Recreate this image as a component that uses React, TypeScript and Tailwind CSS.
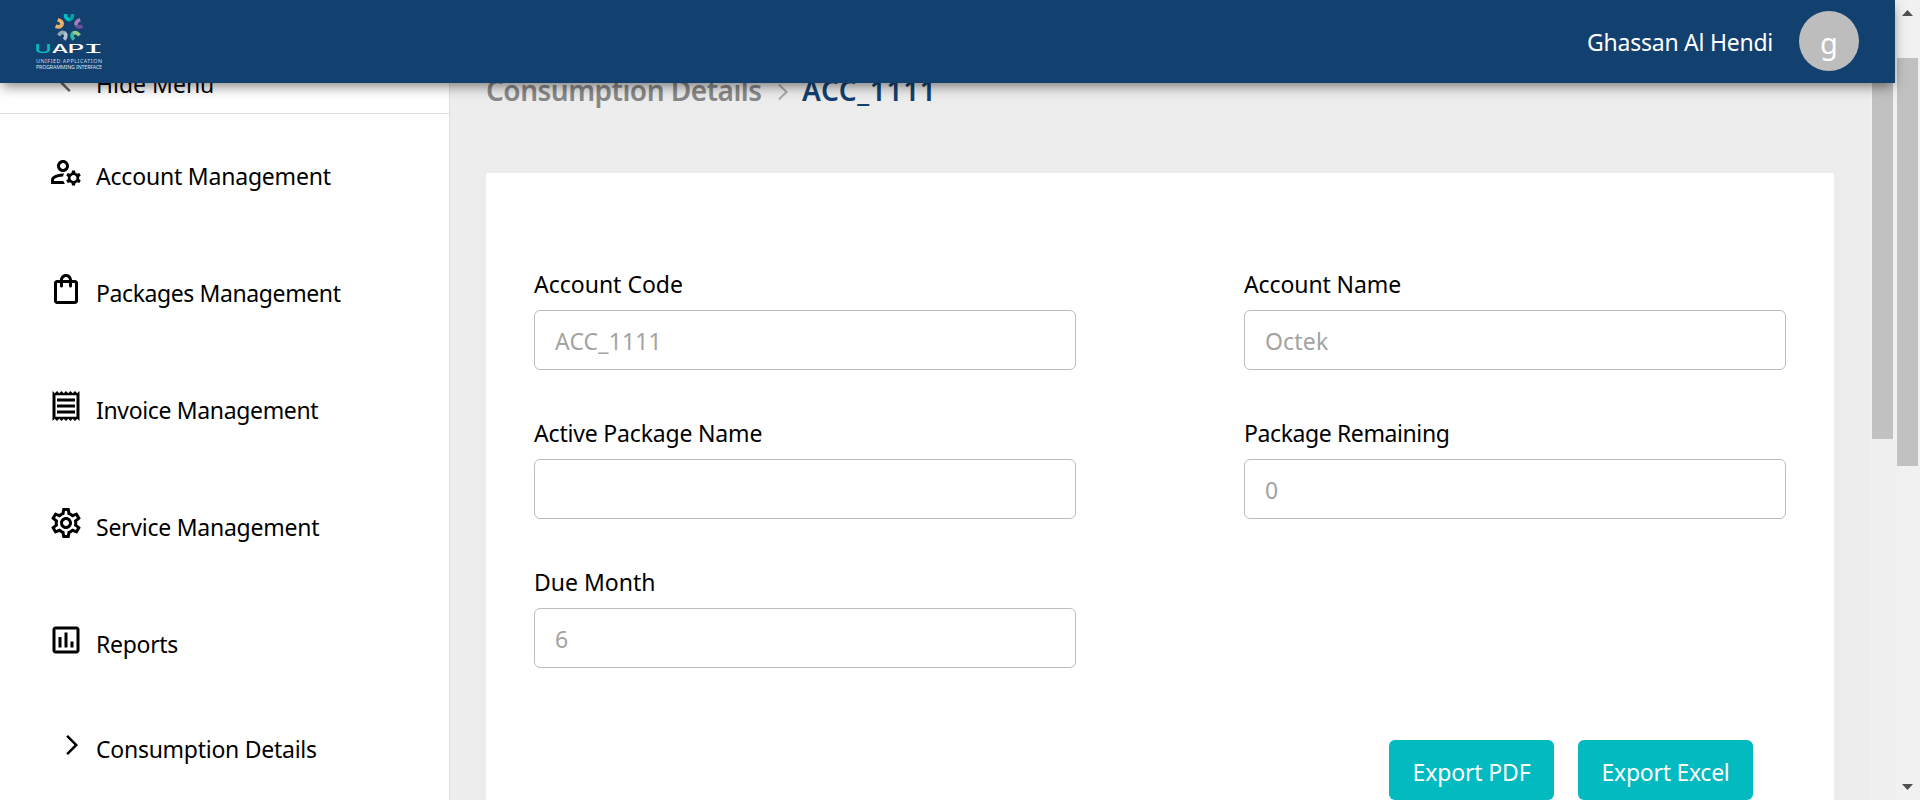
import type { ReactNode } from "react";
import {
  MdOutlineManageAccounts,
  MdOutlineShoppingBag,
  MdOutlineReceipt,
  MdOutlineSettings,
  MdOutlineAssessment,
  MdArrowForwardIos,
  MdArrowBackIos,
} from "react-icons/md";

const petals = [
  { angle: 0, left: "#04bdc0", right: "#00a3a6" },
  { angle: 72, left: "#a67fbd", right: "#6d4fa0" },
  { angle: 144, left: "#8ccb88", right: "#37b6a2" },
  { angle: 216, left: "#b3c6cf", right: "#8fa6b4" },
  { angle: 288, left: "#e5b16c", right: "#edb56a" },
];

function Logo() {
  return (
    <svg width="70" height="60" viewBox="0 0 70 60" className="shrink-0">
      <g transform="translate(35 15)" fill="none" strokeWidth="3.6">
        {petals.map((p) => (
          <g key={p.angle} transform={`rotate(${p.angle})`}>
            <path d="M0 -7.4 C2.6 -7.6 3.6 -9.6 3.5 -13" stroke={p.right} />
            <path d="M0.4 -7.4 C-2.6 -7.6 -3.6 -9.6 -3.5 -13" stroke={p.left} />
          </g>
        ))}
      </g>
      <g fontFamily="Inter, sans-serif" fontSize="11.4" fontWeight="500" fill="#fff">
        <text transform="translate(0.6 41.4) scale(2.05 1)" fill="#05bcc0">U</text>
        <text transform="translate(17.8 41.4) scale(2.05 1)">A</text>
        <text transform="translate(33.6 41.4) scale(2.3 1)">P</text>
      </g>
      <text transform="translate(49 41.4) scale(3 1)" fontFamily="DejaVu Sans Mono, monospace" fontSize="11.4" fill="#fff">
        I
      </text>
      <text x="2" y="51.3" fontFamily="Noto Sans, sans-serif" fontSize="5.4" textLength="66" fill="#cfdae6">
        UNIFIED APPLICATION
      </text>
      <text x="2" y="56.8" fontFamily="Noto Sans, sans-serif" fontSize="5.2" textLength="66" fill="#dde6ee">
        PROGRAMMING INTERFACE
      </text>
    </svg>
  );
}

function NavItem({ icon, label, track }: { icon: ReactNode; label: string; track: string }) {
  return (
    <li className="flex h-[117px] items-center gap-3 pl-12">
      <span className="pb-px text-[36px]">{icon}</span>
      <span className={`pt-[7px] ${track}`}>{label}</span>
    </li>
  );
}

function Field({ label, value, track = "" }: { label: string; value: string; track?: string }) {
  return (
    <div className="flex h-[149px] flex-col">
      <label className={`flex h-[50px] items-center pb-0.5 ${track}`}>{label}</label>
      <div className="flex h-[60px] items-center rounded-[6px] border border-[#bdbdbd] px-5 pt-0.5 tracking-[0.15px] text-[#a3a3a3]">
        {value}
      </div>
    </div>
  );
}

export default function App() {
  return (
    <div className="flex h-[800px] w-[1920px] overflow-hidden bg-white font-['Noto_Sans',sans-serif] text-[23px] leading-8 font-normal text-black">
      <div className="flex w-[1895px] flex-col">
        <header className="z-10 flex h-[83px] shrink-0 items-center justify-between bg-[#12406f] pr-9 pl-[34px] text-white shadow-[0_5px_12px_-2px_rgba(0,0,0,0.5)]">
          <Logo />
          <div className="flex items-center gap-[26px]">
            <span className="pt-px tracking-[-0.25px]">Ghassan Al Hendi</span>
            <span className="mb-px flex size-[60px] items-center justify-center rounded-full bg-[#bdbdbd] pt-1 text-[29px]">
              g
            </span>
          </div>
        </header>

        <div className="flex min-h-0 flex-1">
          <aside className="w-[450px] shrink-0 border-r border-[#dfdfdf]">
            <div className="flex h-[31px] items-end border-b border-[#dedede] pb-px pl-[59px]">
              <MdArrowBackIos className="mb-[18px] size-6 shrink-0 text-[#666]" />
              <span className="mb-[12px] pl-[13px]">Hide Menu</span>
            </div>
            <ul>
              <NavItem icon={<MdOutlineManageAccounts />} label="Account Management" track="tracking-[-0.2px]" />
              <NavItem icon={<MdOutlineShoppingBag />} label="Packages Management" track="tracking-[-0.4px]" />
              <NavItem icon={<MdOutlineReceipt />} label="Invoice Management" track="tracking-[-0.35px]" />
              <NavItem icon={<MdOutlineSettings />} label="Service Management" track="tracking-[-0.25px]" />
              <NavItem icon={<MdOutlineAssessment />} label="Reports" track="tracking-[-0.3px]" />
              <li className="flex h-[92px] items-center gap-3 pl-[60px]">
                <MdArrowForwardIos className="size-6" />
                <span className="pt-2 tracking-[-0.26px]">Consumption Details</span>
              </li>
            </ul>
          </aside>

          <main className="flex min-w-0 flex-1 flex-col bg-[#ededed] pr-[35px] pl-9">
            <div className="flex h-[90px] shrink-0 items-start text-[28px] leading-[38px] font-semibold">
              <span className="-mt-[12px] w-[287px] tracking-[-0.5px] whitespace-nowrap text-[#888]">Consumption Details</span>
              <MdArrowForwardIos className="-mt-px mr-[9px] size-5 text-[#a9a9a9]" />
              <span className="-mt-[12px] tracking-[0.65px] text-[#12406f]">ACC_1111</span>
            </div>
            <section className="min-h-0 w-[1348px] flex-1 bg-white px-12 pt-[87px]">
              <div className="grid grid-cols-[542px_542px] gap-x-[168px]">
                <Field label="Account Code" value="ACC_1111" />
                <Field label="Account Name" value="Octek" track="tracking-[-0.1px]" />
                <Field label="Active Package Name" value="" track="tracking-[-0.18px]" />
                <Field label="Package Remaining" value="0" track="tracking-[-0.4px]" />
                <Field label="Due Month" value="6" />
              </div>
              <div className="mt-[33px] flex justify-end gap-6 pr-[33px] text-white">
                <button className="h-[60px] w-[165px] rounded-[6px] bg-[#02babf] pt-[3px] tracking-[-0.15px]">Export PDF</button>
                <button className="h-[60px] w-[175px] rounded-[6px] bg-[#02babf] pt-[3px] tracking-[-0.27px]">Export Excel</button>
              </div>
            </section>
          </main>

          <div className="w-[25px] bg-[#f0f0f0] pl-[2px]">
            <div className="h-[356px] w-[21px] bg-[#c1c1c1]" />
          </div>
        </div>
      </div>

      <div className="flex w-[25px] flex-col items-center bg-[#f1f1f1] pt-[10px] pb-[10px]">
        <svg width="11" height="6" viewBox="0 0 11 6" className="shrink-0">
          <path d="M5.5 0L11 6H0z" fill="#505050" />
        </svg>
        <div className="mt-[42px] h-[408px] w-[21px] bg-[#c1c1c1]" />
        <svg width="11" height="6" viewBox="0 0 11 6" className="mt-auto shrink-0">
          <path d="M0 0h11L5.5 6z" fill="#505050" />
        </svg>
      </div>
    </div>
  );
}
